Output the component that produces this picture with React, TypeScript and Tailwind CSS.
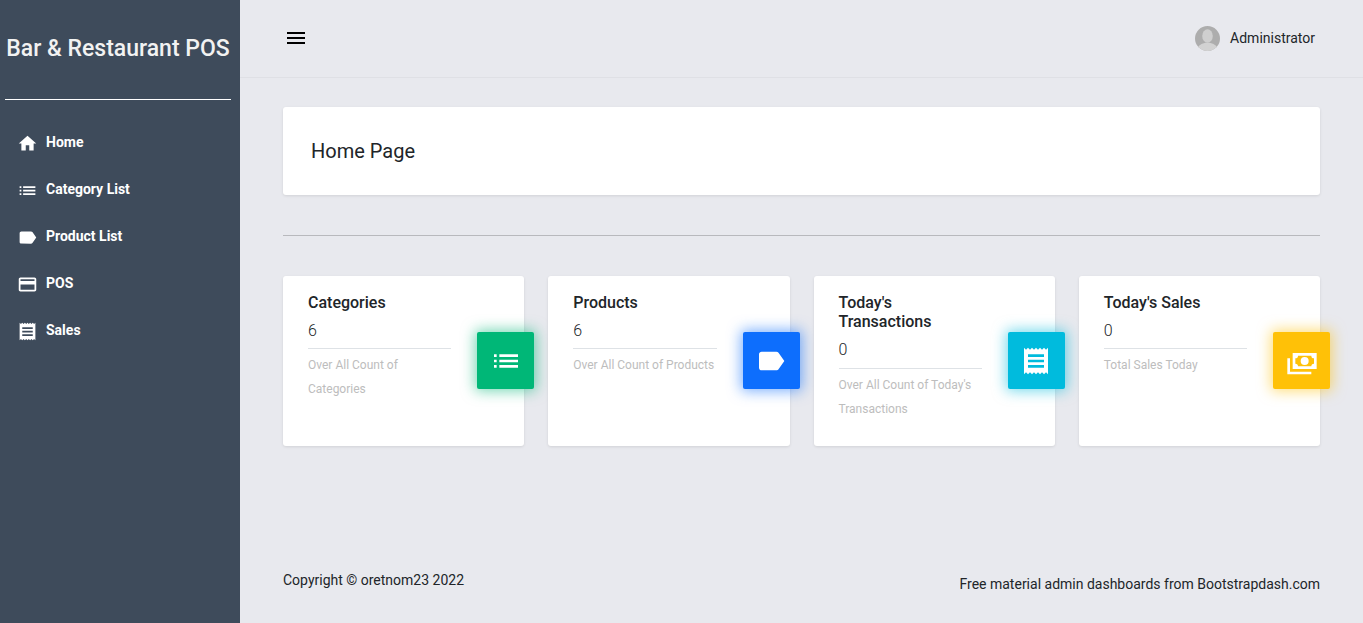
import { MdLabel, MdList, MdCreditCard, MdMenu, MdReceipt } from 'react-icons/md'
import type { IconType } from 'react-icons'

function HomeIcon({ className }: { className?: string }) {
  return (
    <svg viewBox="0 0 24 24" fill="currentColor" width="1em" height="1em" className={className}>
      <path d="M10 20v-6h4v6h5v-8h3L12 3 2 12h3v8z" />
    </svg>
  )
}

function CashIcon({ className }: { className?: string }) {
  return (
    <svg viewBox="0 0 24 24" fill="currentColor" width="1em" height="1em" className={className}>
      <path
        fillRule="evenodd"
        d="M5 6h18v12H5V6zm9 3a3 3 0 0 1 3 3 3 3 0 0 1-3 3 3 3 0 0 1-3-3 3 3 0 0 1 3-3zM9 8a2 2 0 0 1-2 2v4a2 2 0 0 1 2 2h10a2 2 0 0 1 2-2v-4a2 2 0 0 1-2-2H9zM1 10h2v10h16v2H1V10z"
      />
    </svg>
  )
}

const navItems: { label: string; icon: IconType }[] = [
  { label: 'Home', icon: HomeIcon },
  { label: 'Category List', icon: MdList },
  { label: 'Product List', icon: MdLabel },
  { label: 'POS', icon: MdCreditCard },
  { label: 'Sales', icon: MdReceipt },
]

function Avatar() {
  return (
    <svg viewBox="0 0 26 26" className="h-[25px] w-[25px] rounded-full">
      <rect width="26" height="26" fill="#adadad" />
      <ellipse cx="13" cy="10.5" rx="5.5" ry="7" fill="#cfcfcf" />
      <path d="M2 26c0-6 6-8.5 11-8.5S24 20 24 26z" fill="#d2d2d2" />
    </svg>
  )
}

function StatCard({
  title,
  value,
  note,
  icon: Icon,
  color,
}: {
  title: React.ReactNode
  value: string
  note: React.ReactNode
  icon: IconType
  color: string
}) {
  return (
    <div className="relative h-[170px] rounded-[3px] bg-white pl-[25px] pt-[17px] shadow-[0_1px_3px_rgba(0,0,0,0.1)]">
      <div className="w-[143.25px]">
        <h4 className="text-[16px] leading-[19.2px] font-medium text-[#212529]">{title}</h4>
        <p className="mt-[9px] pb-[8px] text-[16px] leading-[19.2px] font-light text-[#212529]">{value}</p>
        <div className="border-t border-[#dee2e6]" />
        <p className="mt-[4px] text-[12px] leading-[24px] text-[#bdbdbd]">{note}</p>
      </div>
      <div className={`absolute top-[56px] right-[-10px] flex h-[57px] w-[57px] items-center justify-center rounded-[2px] ${color}`}>
        <Icon className="text-[32px] text-white" />
      </div>
    </div>
  )
}

export default function App() {
  return (
    <div className="flex h-[623px] overflow-hidden bg-[#e8e9ee] font-['Roboto',sans-serif] text-[#212529]">
      <aside className="w-[240px] shrink-0 bg-[#3e4b5b] px-[5px] text-white">
        <h1 className="mt-[35px] w-[226px] text-center text-[23px] leading-[28px] font-medium whitespace-nowrap text-[#f2f2f2]">Bar &amp; Restaurant POS</h1>
        <div className="mt-[36px] w-[226px] border-t border-white" />
        <nav className="mt-[19px] flex flex-col">
          {navItems.map(({ label, icon: Icon }) => (
            <a key={label} className="flex h-[47px] items-center gap-[8.5px] pl-[11.5px] text-[14px] font-bold">
              <Icon className="mt-[1px] text-[21px]" />
              {label}
            </a>
          ))}
        </nav>
      </aside>

      <div className="flex min-w-0 flex-1 flex-col">
        <header className="flex h-[78px] shrink-0 items-center justify-between border-b border-[#dfe0e5] pr-[48px] pl-[44px]">
          <MdMenu className="mb-[2px] text-[24px] text-black" />
          <div className="flex items-center gap-[10.5px] text-[14px] text-[#212529]">
            <Avatar />
            Administrator
          </div>
        </header>

        <main className="flex flex-1 flex-col px-[43px] pt-[29px]">
          <div className="flex h-[88px] items-center rounded-[3px] bg-white pl-[28px] shadow-[0_1px_3px_rgba(0,0,0,0.1)]">
            <h2 className="text-[20px] text-[#212529]">Home Page</h2>
          </div>
          <hr className="mt-[40px] border-t border-[#b8b9bd]" />
          <div className="mt-[40px] grid grid-cols-4 gap-[24px]">
            <StatCard title="Categories" value="6" note="Over All Count of Categories" icon={MdList} color="bg-[#00b777] shadow-[0_0_14px_2px_rgba(0,183,119,0.55)]" />
            <StatCard title="Products" value="6" note="Over All Count of Products" icon={MdLabel} color="bg-[#0d6efd] shadow-[0_0_14px_2px_rgba(13,110,253,0.55)]" />
            <StatCard title={<>Today's<br />Transactions</>} value="0" note="Over All Count of Today's Transactions" icon={MdReceipt} color="bg-[#00bbdd] shadow-[0_0_14px_2px_rgba(0,187,221,0.55)]" />
            <StatCard title="Today's Sales" value="0" note="Total Sales Today" icon={CashIcon} color="bg-[#ffc107] shadow-[0_0_14px_2px_rgba(255,193,7,0.55)]" />
          </div>
          <footer className="mt-auto flex items-start justify-between pb-[28px] text-[14px] leading-[21px]">
            <span className="-mt-[4px]">Copyright © oretnom23 2022</span>
            <span>Free material admin dashboards from Bootstrapdash.com</span>
          </footer>
        </main>
      </div>
    </div>
  )
}
